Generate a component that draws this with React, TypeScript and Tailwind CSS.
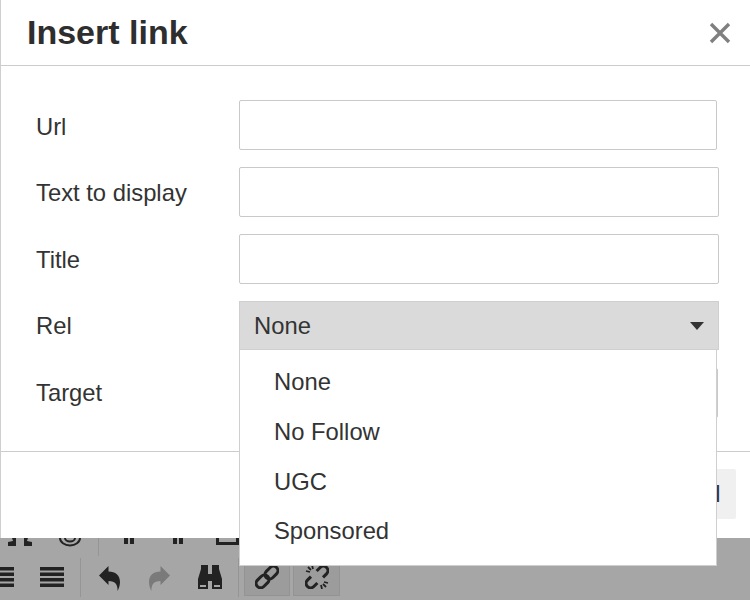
const rels = ["None", "No Follow", "UGC", "Sponsored"];

function Field({ label, width = "w-[480px]", labelPad = "pt-[3px]" }: { label: string; width?: string; labelPad?: string }) {
  return (
    <div className="flex items-center h-[50px]">
      <label className={`w-[203px] shrink-0 ${labelPad}`}>{label}</label>
      <input type="text" className={`${width} h-[50px] rounded-[2px] border border-[#c9c9c9] bg-white`} />
    </div>
  );
}

function RelSelect() {
  return (
    <div className="flex items-start h-[50px]">
      <label className="w-[203px] shrink-0 h-[49px] flex items-center pt-[1px]">Rel</label>
      <div className="relative w-[480px] h-[49px]">
        <div className="flex h-full items-center justify-between border border-[#cfcfcf] bg-[#dadada] pl-[14px] pr-[14px]">
          <span className="pt-[1px]">None</span>
          <svg width="14" height="8" viewBox="0 0 14 8">
            <path d="M0 0h14L7 8z" fill="#333333" />
          </svg>
        </div>
        <ul className="absolute left-0 top-[48px] z-10 w-[478px] border border-[#cfcfcf] bg-white pt-[7px] pb-[9px]">
          {rels.map((r) => (
            <li key={r} className="flex h-[49.8px] items-center pl-[34px]">{r}</li>
          ))}
        </ul>
      </div>
    </div>
  );
}

function JustifyIcon({ className = "" }: { className?: string }) {
  return (
    <svg width="24" height="20" viewBox="0 0 24 20" fill="#222222" className={className}>
      <path d="M0 0h24v3.5H0zM0 5.5h24V9H0zM0 11h24v3.5H0zM0 16.5h24V20H0z" />
    </svg>
  );
}

function UndoIcon({ mirror, color }: { mirror?: boolean; color: string }) {
  return (
    <svg width="21" height="25" viewBox="0 0 21 25" fill={color} className={mirror ? "-scale-x-100" : ""}>
      <path d="M0 9.5L9.5 0v5.5c7 0 11.5 4 11.5 10.5 0 3-1 6.5-2.5 9 .5-6-2-10-9-10v4z" />
    </svg>
  );
}

function BinocularsIcon() {
  return (
    <svg width="24" height="24" viewBox="0 0 24 24">
      <path d="M3 0h7v9h4V0h7v4l3 10v10H14v-8h-4v8H0V14L3 4z" fill="#222222" />
      <path d="M2 20h6v2H2zM16 20h6v2h-6z" fill="#a6a6a6" />
    </svg>
  );
}

function LinkIcon() {
  return (
    <svg width="24" height="24" viewBox="0 0 24 24" fill="none" stroke="#222222" strokeWidth="3">
      <g transform="rotate(-45 12 12)">
        <rect x="-1.5" y="7.5" width="14.5" height="9" rx="4.5" />
        <rect x="11" y="7.5" width="14.5" height="9" rx="4.5" />
      </g>
    </svg>
  );
}

function UnlinkIcon() {
  return (
    <svg width="24" height="24" viewBox="0 0 24 24" fill="none" stroke="#222222" strokeWidth="3">
      <g transform="rotate(-45 12 12)">
        <path d="M8 7.5H3a4.5 4.5 0 0 0 0 9h5" />
        <path d="M16 16.5h5a4.5 4.5 0 0 0 0-9h-5" />
      </g>
      <path strokeWidth="1.8" d="M7 0l1 4M1 6l4 1M3 2l3 3M17 24l-1-4M23 18l-4-1M21 22l-3-3" />
    </svg>
  );
}

function Toolbar() {
  return (
    <div className="h-[62px] bg-[#a6a6a6] overflow-hidden">
      <div className="flex h-[18px] items-start">
        <svg width="24" height="8" viewBox="0 0 24 8" fill="#222222" className="ml-[8px]">
          <path d="M0 8V4l5-1-1-3h4v8zM24 8V4l-5-1 1-3h-4v8z" />
        </svg>
        <svg width="22" height="9" viewBox="0 0 22 9" fill="none" stroke="#222222" strokeWidth="2" className="ml-[27px]">
          <path d="M1 0a10 7.5 0 0 0 20 0M6 0a5 3.5 0 0 0 10 0" />
        </svg>
        <div className="ml-[17px] h-[18px] w-px bg-[#959595]" />
        <svg width="10" height="6" viewBox="0 0 10 6" fill="#222222" className="ml-[25px]">
          <path d="M0 0h4v6H0zM6 0h4v6H6z" />
        </svg>
        <svg width="10" height="6" viewBox="0 0 10 6" fill="#222222" className="ml-[39px]">
          <path d="M0 0h4v6H0zM6 0h4v6H6z" />
        </svg>
        <svg width="23" height="7" viewBox="0 0 23 7" fill="none" stroke="#222222" strokeWidth="3" className="ml-[33px]">
          <path d="M1.5 0v5.5h20V0" />
        </svg>
      </div>
      <div className="flex h-[44px] items-start pt-[2px]">
        <div className="mt-[9px] flex w-[14px] justify-end overflow-hidden">
          <JustifyIcon className="shrink-0" />
        </div>
        <JustifyIcon className="ml-[26px] mt-[9px] shrink-0" />
        <div className="ml-[16px] h-[39px] w-px bg-[#959595]" />
        <div className="ml-[18px] mt-[8px]">
          <UndoIcon color="#222222" />
        </div>
        <div className="ml-[29px] mt-[8px]">
          <UndoIcon mirror color="#7a7a7a" />
        </div>
        <div className="ml-[28px] mt-[7px]">
          <BinocularsIcon />
        </div>
        <div className="ml-[16px] h-[39px] w-px bg-[#959595]" />
        <button className="ml-[5px] mt-[5px] flex h-[33px] w-[46px] justify-center border border-[#939393] bg-[#9c9c9c] pt-[1px]">
          <LinkIcon />
        </button>
        <button className="ml-[3px] mt-[5px] flex h-[33px] w-[47px] justify-center border border-[#939393] bg-[#9c9c9c] pt-[1px]">
          <UnlinkIcon />
        </button>
      </div>
    </div>
  );
}

export default function App() {
  return (
    <div className="w-[750px] h-[600px] overflow-hidden bg-white text-[#333333] text-[23.8px] font-['Liberation_Sans',Arial,sans-serif]">
      <div className="h-[538px] border-l border-[#cfcfcf] flex flex-col">
        <div className="flex h-[66px] shrink-0 items-center justify-between border-b border-[#cccccc] pl-[26px] pr-[19px]">
          <h1 className="text-[34px] font-bold text-[#2e2e2e]">Insert link</h1>
          <svg width="22" height="22" viewBox="0 0 22 22">
            <path d="M2 2l18 18M20 2L2 20" stroke="#7f7f7f" strokeWidth="3.4" />
          </svg>
        </div>
        <div className="flex h-[385px] shrink-0 flex-col gap-[17px] pl-[35px] pt-[34px]">
          <Field label="Url" width="w-[478px]" />
          <Field label="Text to display" labelPad="pt-[2px]" />
          <Field label="Title" labelPad="pt-[2px]" />
          <RelSelect />
          <Field label="Target" width="w-[479px]" labelPad="pt-0" />
        </div>
        <div className="flex flex-1 justify-end border-t border-[#cccccc] pr-[14px] pt-[17px]">
          <button className="h-[50px] rounded-[2px] bg-[#f0f0f0] pl-[16px] pr-[15.5px]">Cancel</button>
        </div>
      </div>
      <Toolbar />
    </div>
  );
}
